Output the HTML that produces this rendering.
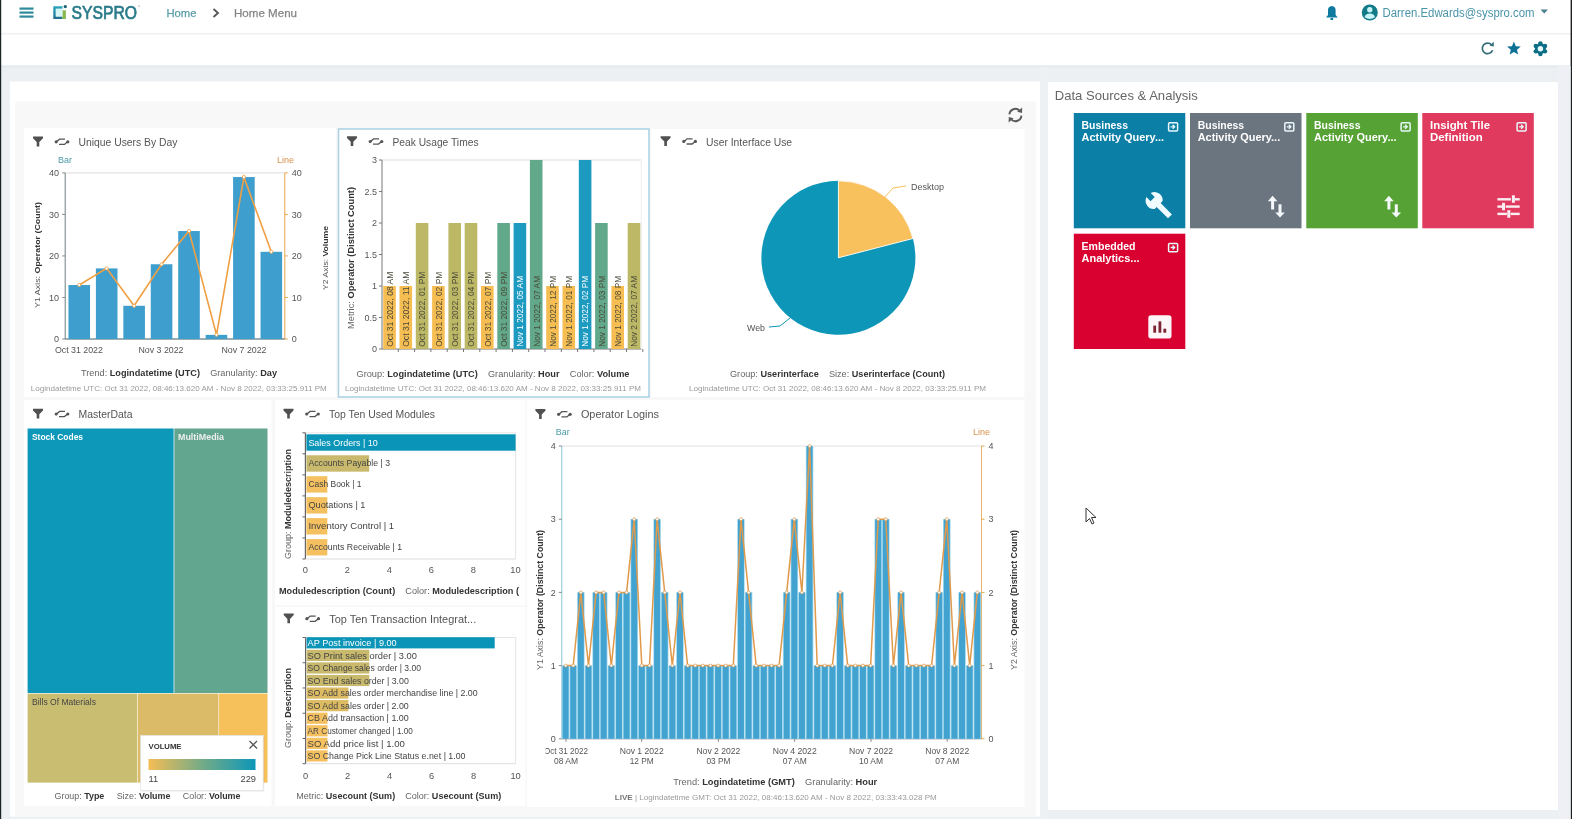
<!DOCTYPE html>
<html><head><meta charset="utf-8"><title>SYSPRO Home Menu</title>
<style>html,body{margin:0;padding:0;background:#e9eef1;overflow:hidden;}svg{display:block;font-family:"Liberation Sans",sans-serif;filter:blur(0.35px);}</style>
</head><body>
<svg width="1572" height="819" viewBox="0 0 1572 819" font-family="Liberation Sans, sans-serif"><rect x="0.00" y="0.00" width="1572.00" height="819.00" fill="#ecf0f3" />
<rect x="0.00" y="65.50" width="1572.00" height="2.00" fill="#e4e9ec" />
<rect x="0.00" y="0.00" width="1572.00" height="33.00" fill="#ffffff" />
<rect x="0.00" y="33.00" width="1572.00" height="1.50" fill="#eef0f1" />
<rect x="0.00" y="34.50" width="1572.00" height="31.50" fill="#ffffff" />
<rect x="0.00" y="65.00" width="1572.00" height="1.00" fill="#eef1f3" />
<rect x="0.00" y="0.00" width="1.20" height="819.00" fill="#1c2426" />
<rect x="1570.60" y="0.00" width="1.40" height="819.00" fill="#1e2220" />
<rect x="19.50" y="7.50" width="14.00" height="2.20" fill="#2f8a9c" />
<rect x="19.50" y="11.50" width="14.00" height="2.20" fill="#2f8a9c" />
<rect x="19.50" y="15.50" width="14.00" height="2.20" fill="#2f8a9c" />
<defs><linearGradient id="lg1" x1="0" y1="0" x2="0" y2="1"><stop offset="0" stop-color="#2aa6c0"/><stop offset="1" stop-color="#1f6e8c"/></linearGradient></defs>
<path d="M53.3 6.3 L62.5 6.3 L62.5 8.8 L55.8 8.8 L55.8 16.4 L62.5 16.4 L62.5 19 L53.3 19 Z" fill="url(#lg1)"/>
<rect x="62.40" y="10.30" width="3.50" height="8.70" fill="#8ab850" />
<rect x="55.80" y="8.80" width="6.60" height="7.60" fill="#d8f6f4" />
<circle cx="65.3" cy="6.6" r="1.7" fill="#1d6070"/>
<circle cx="139" cy="6.2" r="0.9" fill="none" stroke="#9ab" stroke-width="0.4"/>
<text x="71.50" y="19.10" font-size="17.5" fill="#2a7b8b" font-weight="normal" text-anchor="start" textLength="65.5" lengthAdjust="spacingAndGlyphs" stroke="#2a7b8b" stroke-width="0.7">SYSPRO</text>
<text x="166.50" y="17.18" font-size="11.6" fill="#5b9ca8" font-weight="normal" text-anchor="start" textLength="30.0" lengthAdjust="spacingAndGlyphs" stroke="#5b9ca8" stroke-width="0.25">Home</text>
<path d="M213.5 9 L218 13 L213.5 17" fill="none" stroke="#555" stroke-width="1.8"/>
<text x="234.00" y="17.18" font-size="11.6" fill="#858585" font-weight="normal" text-anchor="start" textLength="63.0" lengthAdjust="spacingAndGlyphs" stroke="#858585" stroke-width="0.25">Home Menu</text>
<path d="M1326 17.5 L1328 15 L1328 10 Q1328 6.5 1331.8 6 Q1335.6 6.5 1335.6 10 L1335.6 15 L1337.8 17.5 Z" fill="#0e7aa0"/>
<rect x="1330.5" y="18" width="2.6" height="2" fill="#0e7aa0"/>
<circle cx="1369.8" cy="12.5" r="8" fill="#137a88"/>
<circle cx="1369.8" cy="9.8" r="2.7" fill="#c8f4f8"/>
<path d="M1364.6 17.2 Q1365.5 13.6 1369.8 13.6 Q1374.1 13.6 1375 17.2 Q1372.5 19 1369.8 19 Q1367.1 19 1364.6 17.2 Z" fill="#c8f4f8"/>
<text x="1382.50" y="16.82" font-size="12" fill="#4a94a8" font-weight="normal" text-anchor="start" textLength="152.0" lengthAdjust="spacingAndGlyphs" >Darren.Edwards@syspro.com</text>
<path d="M1540.5 9.5 L1548 9.5 L1544.2 13.5 Z" fill="#4a7f90"/>
<path d="M1491.6 44.8 A5.3 5.3 0 1 0 1492.6 50.2" fill="none" stroke="#356e7a" stroke-width="1.7"/>
<path d="M1489.6 45.8 L1493.8 41.8 L1493.8 46.6 Z" fill="#356e7a"/>
<polygon points="1513.90,41.60 1515.80,46.18 1520.75,46.58 1516.98,49.80 1518.13,54.62 1513.90,52.04 1509.67,54.62 1510.82,49.80 1507.05,46.58 1512.00,46.18" fill="#0d7196"/>
<circle cx="1540.4" cy="48.7" r="5.476" fill="#0d6f85"/>
<circle cx="1540.40" cy="43.37" r="2.22" fill="#0d6f85"/>
<circle cx="1545.01" cy="46.04" r="2.22" fill="#0d6f85"/>
<circle cx="1545.01" cy="51.36" r="2.22" fill="#0d6f85"/>
<circle cx="1540.40" cy="54.03" r="2.22" fill="#0d6f85"/>
<circle cx="1535.79" cy="51.36" r="2.22" fill="#0d6f85"/>
<circle cx="1535.79" cy="46.04" r="2.22" fill="#0d6f85"/>
<circle cx="1540.4" cy="48.7" r="2.74" fill="#e8f8fc"/>
<rect x="9.80" y="81.50" width="1030.20" height="735.00" fill="#ffffff" />
<rect x="15.20" y="101.50" width="1021.00" height="715.00" fill="#f8f8f8" />
<g fill="none" stroke="#5a5a5a" stroke-width="1.9"><path d="M1009.4 114.4 A6 6 0 0 1 1019.6 110.6"/><path d="M1021.4 115.6 A6 6 0 0 1 1011.2 119.4"/></g>
<path d="M1017.2 111.8 L1022.2 107.6 L1022 113 Z" fill="#5a5a5a"/><path d="M1013.6 118.2 L1008.6 122.4 L1008.8 117 Z" fill="#5a5a5a"/>
<rect x="24.00" y="128.00" width="312.00" height="269.00" fill="#ffffff" />
<path d="M33 136.60000000000002 L43 136.60000000000002 L43 138.20000000000002 L39.3 142.0 L39.3 146.4 L36.7 146.4 L36.7 142.0 L33 138.20000000000002 Z" fill="#505050"/>
<g fill="none" stroke="#555" stroke-width="1.3"><path d="M56.5 141.8 L59.5 139.20000000000002 L65 139.20000000000002"/><path d="M67.5 141.8 L64.5 144.4 L59 144.4"/></g>
<circle cx="56.2" cy="141.8" r="1.6" fill="#555"/><circle cx="67.8" cy="141.8" r="1.6" fill="#555"/>
<text x="78.50" y="145.94" font-size="11.5" fill="#555" font-weight="normal" text-anchor="start" textLength="99.0" lengthAdjust="spacingAndGlyphs" >Unique Users By Day</text>
<text x="58.00" y="162.66" font-size="8.5" fill="#4a9aa8" font-weight="normal" text-anchor="start" textLength="14.0" lengthAdjust="spacingAndGlyphs" >Bar</text>
<text x="277.00" y="162.66" font-size="8.5" fill="#d8904a" font-weight="normal" text-anchor="start" textLength="17.0" lengthAdjust="spacingAndGlyphs" >Line</text>
<line x1="65.20" y1="172.90" x2="284.80" y2="172.90" stroke="#ddd" stroke-width="1" />
<line x1="65.20" y1="172.90" x2="65.20" y2="339.00" stroke="#6f7f84" stroke-width="1" />
<line x1="284.80" y1="172.90" x2="284.80" y2="339.00" stroke="#e8a64a" stroke-width="1" />
<line x1="65.20" y1="339.00" x2="284.80" y2="339.00" stroke="#3d5f68" stroke-width="1.2" />
<line x1="62.20" y1="339.00" x2="65.20" y2="339.00" stroke="#888" stroke-width="1" />
<line x1="284.80" y1="339.00" x2="287.80" y2="339.00" stroke="#e8a64a" stroke-width="1" />
<text x="59.00" y="342.24" font-size="9" fill="#555" font-weight="normal" text-anchor="end" >0</text>
<text x="291.80" y="342.24" font-size="9" fill="#555" font-weight="normal" text-anchor="start" >0</text>
<line x1="62.20" y1="297.48" x2="65.20" y2="297.48" stroke="#888" stroke-width="1" />
<line x1="284.80" y1="297.48" x2="287.80" y2="297.48" stroke="#e8a64a" stroke-width="1" />
<text x="59.00" y="300.72" font-size="9" fill="#555" font-weight="normal" text-anchor="end" >10</text>
<text x="291.80" y="300.72" font-size="9" fill="#555" font-weight="normal" text-anchor="start" >10</text>
<line x1="62.20" y1="255.95" x2="65.20" y2="255.95" stroke="#888" stroke-width="1" />
<line x1="284.80" y1="255.95" x2="287.80" y2="255.95" stroke="#e8a64a" stroke-width="1" />
<text x="59.00" y="259.19" font-size="9" fill="#555" font-weight="normal" text-anchor="end" >20</text>
<text x="291.80" y="259.19" font-size="9" fill="#555" font-weight="normal" text-anchor="start" >20</text>
<line x1="62.20" y1="214.43" x2="65.20" y2="214.43" stroke="#888" stroke-width="1" />
<line x1="284.80" y1="214.43" x2="287.80" y2="214.43" stroke="#e8a64a" stroke-width="1" />
<text x="59.00" y="217.67" font-size="9" fill="#555" font-weight="normal" text-anchor="end" >30</text>
<text x="291.80" y="217.67" font-size="9" fill="#555" font-weight="normal" text-anchor="start" >30</text>
<line x1="62.20" y1="172.90" x2="65.20" y2="172.90" stroke="#888" stroke-width="1" />
<line x1="284.80" y1="172.90" x2="287.80" y2="172.90" stroke="#e8a64a" stroke-width="1" />
<text x="59.00" y="176.14" font-size="9" fill="#555" font-weight="normal" text-anchor="end" >40</text>
<text x="291.80" y="176.14" font-size="9" fill="#555" font-weight="normal" text-anchor="start" >40</text>
<rect x="68.45" y="285.02" width="21.60" height="53.98" fill="#3e9fcf" />
<rect x="95.89" y="268.41" width="21.60" height="70.59" fill="#3e9fcf" />
<rect x="123.33" y="305.78" width="21.60" height="33.22" fill="#3e9fcf" />
<rect x="150.77" y="264.25" width="21.60" height="74.75" fill="#3e9fcf" />
<rect x="178.21" y="231.03" width="21.60" height="107.97" fill="#3e9fcf" />
<rect x="205.65" y="334.85" width="21.60" height="4.15" fill="#3e9fcf" />
<rect x="233.09" y="177.05" width="21.60" height="161.95" fill="#3e9fcf" />
<rect x="260.53" y="251.80" width="21.60" height="87.20" fill="#3e9fcf" />
<polyline points="79.2,285.0 106.7,268.4 134.1,305.8 161.6,264.3 189.0,231.0 216.5,334.8 243.9,177.1 271.3,251.8" fill="none" stroke="#f0a044" stroke-width="1.6"/>
<circle cx="79.2" cy="285.0" r="1.6" fill="#fff" stroke="#f0a044" stroke-width="0.8"/>
<circle cx="106.7" cy="268.4" r="1.6" fill="#fff" stroke="#f0a044" stroke-width="0.8"/>
<circle cx="134.1" cy="305.8" r="1.6" fill="#fff" stroke="#f0a044" stroke-width="0.8"/>
<circle cx="161.6" cy="264.3" r="1.6" fill="#fff" stroke="#f0a044" stroke-width="0.8"/>
<circle cx="189.0" cy="231.0" r="1.6" fill="#fff" stroke="#f0a044" stroke-width="0.8"/>
<circle cx="216.5" cy="334.8" r="1.6" fill="#fff" stroke="#f0a044" stroke-width="0.8"/>
<circle cx="243.9" cy="177.1" r="1.6" fill="#fff" stroke="#f0a044" stroke-width="0.8"/>
<circle cx="271.3" cy="251.8" r="1.6" fill="#fff" stroke="#f0a044" stroke-width="0.8"/>
<text x="78.90" y="353.05" font-size="9.3" fill="#555" font-weight="normal" text-anchor="middle" textLength="48.0" lengthAdjust="spacingAndGlyphs" >Oct 31 2022</text>
<text x="161.00" y="353.05" font-size="9.3" fill="#555" font-weight="normal" text-anchor="middle" textLength="45.0" lengthAdjust="spacingAndGlyphs" >Nov 3 2022</text>
<text x="244.00" y="353.05" font-size="9.3" fill="#555" font-weight="normal" text-anchor="middle" textLength="45.0" lengthAdjust="spacingAndGlyphs" >Nov 7 2022</text>
<text transform="translate(40,255) rotate(-90)" font-size="8" text-anchor="middle" fill="#555" textLength="106" lengthAdjust="spacingAndGlyphs" xml:space="preserve"><tspan>Y1 Axis: </tspan><tspan font-weight="bold" fill="#333">Operator (Count)</tspan></text>
<text transform="translate(327.5,258) rotate(-90)" font-size="8" text-anchor="middle" fill="#555" textLength="64" lengthAdjust="spacingAndGlyphs" xml:space="preserve"><tspan>Y2 Axis: </tspan><tspan font-weight="bold" fill="#333">Volume</tspan></text>
<text x="179.00" y="375.95" font-size="9.3" text-anchor="middle" textLength="196.0" lengthAdjust="spacingAndGlyphs"  xml:space="preserve"><tspan fill="#666" font-weight="normal">Trend: </tspan><tspan fill="#333" font-weight="bold">Logindatetime (UTC)</tspan><tspan fill="#666" font-weight="normal">    Granularity: </tspan><tspan fill="#333" font-weight="bold">Day</tspan></text>
<text x="178.80" y="390.70" font-size="7.5" fill="#9a9a9a" font-weight="normal" text-anchor="middle" textLength="296.0" lengthAdjust="spacingAndGlyphs" >Logindatetime UTC: Oct 31 2022, 08:46:13.620 AM - Nov 8 2022, 03:33:25.911 PM</text>
<rect x="338.50" y="129.00" width="310.50" height="268.00" fill="#ffffff" stroke="#a9d0e2" stroke-width="1.5"/>
<path d="M347 136.3 L357 136.3 L357 137.9 L353.3 141.7 L353.3 146.1 L350.7 146.1 L350.7 141.7 L347 137.9 Z" fill="#505050"/>
<g fill="none" stroke="#555" stroke-width="1.3"><path d="M370.5 141.5 L373.5 138.9 L379 138.9"/><path d="M381.5 141.5 L378.5 144.1 L373 144.1"/></g>
<circle cx="370.2" cy="141.5" r="1.6" fill="#555"/><circle cx="381.8" cy="141.5" r="1.6" fill="#555"/>
<text x="392.50" y="145.64" font-size="11.5" fill="#555" font-weight="normal" text-anchor="start" textLength="86.0" lengthAdjust="spacingAndGlyphs" >Peak Usage Times</text>
<line x1="382.00" y1="160.00" x2="641.20" y2="160.00" stroke="#ddd" stroke-width="1" />
<line x1="641.20" y1="160.00" x2="641.20" y2="349.00" stroke="#eee" stroke-width="1" />
<line x1="382.00" y1="160.00" x2="382.00" y2="349.00" stroke="#777" stroke-width="1" />
<line x1="382.00" y1="349.00" x2="641.20" y2="349.00" stroke="#777" stroke-width="1" />
<line x1="379.00" y1="349.00" x2="382.00" y2="349.00" stroke="#777" stroke-width="1" />
<text x="377.00" y="352.24" font-size="9" fill="#555" font-weight="normal" text-anchor="end" >0</text>
<line x1="379.00" y1="317.50" x2="382.00" y2="317.50" stroke="#777" stroke-width="1" />
<text x="377.00" y="320.74" font-size="9" fill="#555" font-weight="normal" text-anchor="end" >0.5</text>
<line x1="379.00" y1="286.00" x2="382.00" y2="286.00" stroke="#777" stroke-width="1" />
<text x="377.00" y="289.24" font-size="9" fill="#555" font-weight="normal" text-anchor="end" >1</text>
<line x1="379.00" y1="254.50" x2="382.00" y2="254.50" stroke="#777" stroke-width="1" />
<text x="377.00" y="257.74" font-size="9" fill="#555" font-weight="normal" text-anchor="end" >1.5</text>
<line x1="379.00" y1="223.00" x2="382.00" y2="223.00" stroke="#777" stroke-width="1" />
<text x="377.00" y="226.24" font-size="9" fill="#555" font-weight="normal" text-anchor="end" >2</text>
<line x1="379.00" y1="191.50" x2="382.00" y2="191.50" stroke="#777" stroke-width="1" />
<text x="377.00" y="194.74" font-size="9" fill="#555" font-weight="normal" text-anchor="end" >2.5</text>
<line x1="379.00" y1="160.00" x2="382.00" y2="160.00" stroke="#777" stroke-width="1" />
<text x="377.00" y="163.24" font-size="9" fill="#555" font-weight="normal" text-anchor="end" >3</text>
<text transform="translate(354,258) rotate(-90)" font-size="9.3" text-anchor="middle" fill="#666" textLength="142" lengthAdjust="spacingAndGlyphs" xml:space="preserve"><tspan>Metric: </tspan><tspan font-weight="bold" fill="#333">Operator (Distinct Count)</tspan></text>
<rect x="383.20" y="286.00" width="12.60" height="63.00" fill="#f6be52" />
<line x1="398.30" y1="349.00" x2="398.30" y2="352.00" stroke="#777" stroke-width="1" />
<text transform="translate(392.80,346.8) rotate(-90)" font-size="9" fill="#4a4a3a" textLength="75.1" lengthAdjust="spacingAndGlyphs">Oct 31 2022, 08 AM</text>
<rect x="399.50" y="286.00" width="12.60" height="63.00" fill="#f6be52" />
<line x1="414.60" y1="349.00" x2="414.60" y2="352.00" stroke="#777" stroke-width="1" />
<text transform="translate(409.10,346.8) rotate(-90)" font-size="9" fill="#4a4a3a" textLength="75.1" lengthAdjust="spacingAndGlyphs">Oct 31 2022, 11 AM</text>
<rect x="415.80" y="223.00" width="12.60" height="126.00" fill="#bdb866" />
<line x1="430.90" y1="349.00" x2="430.90" y2="352.00" stroke="#777" stroke-width="1" />
<text transform="translate(425.40,346.8) rotate(-90)" font-size="9" fill="#4a4a3a" textLength="75.1" lengthAdjust="spacingAndGlyphs">Oct 31 2022, 01 PM</text>
<rect x="432.10" y="286.00" width="12.60" height="63.00" fill="#f6be52" />
<line x1="447.20" y1="349.00" x2="447.20" y2="352.00" stroke="#777" stroke-width="1" />
<text transform="translate(441.70,346.8) rotate(-90)" font-size="9" fill="#4a4a3a" textLength="75.1" lengthAdjust="spacingAndGlyphs">Oct 31 2022, 02 PM</text>
<rect x="448.40" y="223.00" width="12.60" height="126.00" fill="#bdb866" />
<line x1="463.50" y1="349.00" x2="463.50" y2="352.00" stroke="#777" stroke-width="1" />
<text transform="translate(458.00,346.8) rotate(-90)" font-size="9" fill="#4a4a3a" textLength="75.1" lengthAdjust="spacingAndGlyphs">Oct 31 2022, 03 PM</text>
<rect x="464.70" y="223.00" width="12.60" height="126.00" fill="#bdb866" />
<line x1="479.80" y1="349.00" x2="479.80" y2="352.00" stroke="#777" stroke-width="1" />
<text transform="translate(474.30,346.8) rotate(-90)" font-size="9" fill="#4a4a3a" textLength="75.1" lengthAdjust="spacingAndGlyphs">Oct 31 2022, 04 PM</text>
<rect x="481.00" y="286.00" width="12.60" height="63.00" fill="#f6be52" />
<line x1="496.10" y1="349.00" x2="496.10" y2="352.00" stroke="#777" stroke-width="1" />
<text transform="translate(490.60,346.8) rotate(-90)" font-size="9" fill="#4a4a3a" textLength="75.1" lengthAdjust="spacingAndGlyphs">Oct 31 2022, 07 PM</text>
<rect x="497.30" y="223.00" width="12.60" height="126.00" fill="#62a88a" />
<line x1="512.40" y1="349.00" x2="512.40" y2="352.00" stroke="#777" stroke-width="1" />
<text transform="translate(506.90,346.8) rotate(-90)" font-size="9" fill="#4a4a3a" textLength="75.1" lengthAdjust="spacingAndGlyphs">Oct 31 2022, 09 PM</text>
<rect x="513.60" y="223.00" width="12.60" height="126.00" fill="#1c9ac0" />
<line x1="528.70" y1="349.00" x2="528.70" y2="352.00" stroke="#777" stroke-width="1" />
<text transform="translate(523.20,346.8) rotate(-90)" font-size="9" fill="#fff" textLength="70.9" lengthAdjust="spacingAndGlyphs">Nov 1 2022, 05 AM</text>
<rect x="529.90" y="160.00" width="12.60" height="189.00" fill="#62a88a" />
<line x1="545.00" y1="349.00" x2="545.00" y2="352.00" stroke="#777" stroke-width="1" />
<text transform="translate(539.50,346.8) rotate(-90)" font-size="9" fill="#4a4a3a" textLength="70.9" lengthAdjust="spacingAndGlyphs">Nov 1 2022, 07 AM</text>
<rect x="546.20" y="286.00" width="12.60" height="63.00" fill="#f6be52" />
<line x1="561.30" y1="349.00" x2="561.30" y2="352.00" stroke="#777" stroke-width="1" />
<text transform="translate(555.80,346.8) rotate(-90)" font-size="9" fill="#4a4a3a" textLength="70.9" lengthAdjust="spacingAndGlyphs">Nov 1 2022, 12 PM</text>
<rect x="562.50" y="286.00" width="12.60" height="63.00" fill="#f6be52" />
<line x1="577.60" y1="349.00" x2="577.60" y2="352.00" stroke="#777" stroke-width="1" />
<text transform="translate(572.10,346.8) rotate(-90)" font-size="9" fill="#4a4a3a" textLength="70.9" lengthAdjust="spacingAndGlyphs">Nov 1 2022, 01 PM</text>
<rect x="578.80" y="160.00" width="12.60" height="189.00" fill="#1c9ac0" />
<line x1="593.90" y1="349.00" x2="593.90" y2="352.00" stroke="#777" stroke-width="1" />
<text transform="translate(588.40,346.8) rotate(-90)" font-size="9" fill="#fff" textLength="70.9" lengthAdjust="spacingAndGlyphs">Nov 1 2022, 02 PM</text>
<rect x="595.10" y="223.00" width="12.60" height="126.00" fill="#62a88a" />
<line x1="610.20" y1="349.00" x2="610.20" y2="352.00" stroke="#777" stroke-width="1" />
<text transform="translate(604.70,346.8) rotate(-90)" font-size="9" fill="#4a4a3a" textLength="70.9" lengthAdjust="spacingAndGlyphs">Nov 1 2022, 03 PM</text>
<rect x="611.40" y="286.00" width="12.60" height="63.00" fill="#f6be52" />
<line x1="626.50" y1="349.00" x2="626.50" y2="352.00" stroke="#777" stroke-width="1" />
<text transform="translate(621.00,346.8) rotate(-90)" font-size="9" fill="#4a4a3a" textLength="70.9" lengthAdjust="spacingAndGlyphs">Nov 1 2022, 08 PM</text>
<rect x="627.70" y="223.00" width="12.60" height="126.00" fill="#bdb866" />
<line x1="642.80" y1="349.00" x2="642.80" y2="352.00" stroke="#777" stroke-width="1" />
<text transform="translate(637.30,346.8) rotate(-90)" font-size="9" fill="#4a4a3a" textLength="70.9" lengthAdjust="spacingAndGlyphs">Nov 2 2022, 07 AM</text>
<text x="493.00" y="376.75" font-size="9.3" text-anchor="middle" textLength="273.0" lengthAdjust="spacingAndGlyphs"  xml:space="preserve"><tspan fill="#666" font-weight="normal">Group: </tspan><tspan fill="#333" font-weight="bold">Logindatetime (UTC)</tspan><tspan fill="#666" font-weight="normal">    Granularity: </tspan><tspan fill="#333" font-weight="bold">Hour</tspan><tspan fill="#666" font-weight="normal">    Color: </tspan><tspan fill="#333" font-weight="bold">Volume</tspan></text>
<text x="493.00" y="390.50" font-size="7.5" fill="#9a9a9a" font-weight="normal" text-anchor="middle" textLength="296.0" lengthAdjust="spacingAndGlyphs" >Logindatetime UTC: Oct 31 2022, 08:46:13.620 AM - Nov 8 2022, 03:33:25.911 PM</text>
<rect x="651.00" y="129.00" width="373.50" height="268.00" fill="#ffffff" />
<path d="M660.6 136.20000000000002 L670.6 136.20000000000002 L670.6 137.8 L666.9 141.6 L666.9 146.0 L664.3000000000001 146.0 L664.3000000000001 141.6 L660.6 137.8 Z" fill="#505050"/>
<g fill="none" stroke="#555" stroke-width="1.3"><path d="M684.1 141.4 L687.1 138.8 L692.6 138.8"/><path d="M695.1 141.4 L692.1 144.0 L686.6 144.0"/></g>
<circle cx="683.8000000000001" cy="141.4" r="1.6" fill="#555"/><circle cx="695.4" cy="141.4" r="1.6" fill="#555"/>
<text x="706.10" y="145.54" font-size="11.5" fill="#555" font-weight="normal" text-anchor="start" textLength="86.0" lengthAdjust="spacingAndGlyphs" >User Interface Use</text>
<path d="M838.4 257.8 L838.4 180.8 A77 77 0 1 0 912.95 238.52 Z" fill="#0e96b8"/>
<path d="M838.4 257.8 L838.4 180.8 A77 77 0 0 1 912.95 238.52 Z" fill="#f8c15e" stroke="#fff" stroke-width="0.8"/>
<polyline points="884,198 893,188 906,186" fill="none" stroke="#f7c25c" stroke-width="1"/>
<polyline points="790,318 780,326 769,327" fill="none" stroke="#0e96b8" stroke-width="1"/>
<text x="911.00" y="189.65" font-size="9.3" fill="#555" font-weight="normal" text-anchor="start" textLength="33.0" lengthAdjust="spacingAndGlyphs" >Desktop</text>
<text x="747.00" y="330.75" font-size="9.3" fill="#555" font-weight="normal" text-anchor="start" textLength="18.0" lengthAdjust="spacingAndGlyphs" >Web</text>
<text x="837.50" y="376.65" font-size="9.3" text-anchor="middle" textLength="215.0" lengthAdjust="spacingAndGlyphs"  xml:space="preserve"><tspan fill="#666" font-weight="normal">Group: </tspan><tspan fill="#333" font-weight="bold">Userinterface</tspan><tspan fill="#666" font-weight="normal">    Size: </tspan><tspan fill="#333" font-weight="bold">Userinterface (Count)</tspan></text>
<text x="837.50" y="391.40" font-size="7.5" fill="#9a9a9a" font-weight="normal" text-anchor="middle" textLength="297.0" lengthAdjust="spacingAndGlyphs" >Logindatetime UTC: Oct 31 2022, 08:46:13.620 AM - Nov 8 2022, 03:33:25.911 PM</text>
<rect x="24.00" y="400.00" width="247.50" height="406.00" fill="#ffffff" />
<path d="M33 408.8 L43 408.8 L43 410.4 L39.3 414.2 L39.3 418.6 L36.7 418.6 L36.7 414.2 L33 410.4 Z" fill="#505050"/>
<g fill="none" stroke="#555" stroke-width="1.3"><path d="M56.5 414 L59.5 411.4 L65 411.4"/><path d="M67.5 414 L64.5 416.6 L59 416.6"/></g>
<circle cx="56.2" cy="414" r="1.6" fill="#555"/><circle cx="67.8" cy="414" r="1.6" fill="#555"/>
<text x="78.50" y="418.14" font-size="11.5" fill="#555" font-weight="normal" text-anchor="start" textLength="54.0" lengthAdjust="spacingAndGlyphs" >MasterData</text>
<rect x="27.60" y="428.50" width="146.00" height="264.50" fill="#0d97b9" />
<rect x="174.30" y="428.50" width="93.20" height="264.50" fill="#62a690" />
<rect x="27.60" y="693.60" width="109.40" height="89.00" fill="#c9bd72" />
<rect x="137.60" y="693.60" width="80.90" height="89.00" fill="#dbbb68" />
<rect x="219.10" y="693.60" width="48.40" height="89.00" fill="#f6c05a" />
<text x="32.00" y="440.35" font-size="9.3" fill="#fff" font-weight="bold" text-anchor="start" textLength="51.0" lengthAdjust="spacingAndGlyphs" >Stock Codes</text>
<text x="178.00" y="440.35" font-size="9.3" fill="#eee" font-weight="bold" text-anchor="start" textLength="46.0" lengthAdjust="spacingAndGlyphs" >MultiMedia</text>
<text x="32.00" y="705.35" font-size="9.3" fill="#444" font-weight="normal" text-anchor="start" textLength="64.0" lengthAdjust="spacingAndGlyphs" >Bills Of Materials</text>
<rect x="141.70" y="736.60" width="122.50" height="55.00" fill="#000" opacity="0.08"/>
<rect x="140.70" y="735.40" width="122.50" height="55.00" fill="#ffffff" stroke="#e3e3e3" stroke-width="0.8"/>
<text x="148.50" y="749.38" font-size="8" fill="#333" font-weight="bold" text-anchor="start" textLength="33.0" lengthAdjust="spacingAndGlyphs" >VOLUME</text>
<path d="M249.5 741 L257 748.5 M257 741 L249.5 748.5" stroke="#555" stroke-width="1.3"/>
<defs><linearGradient id="vg" x1="0" x2="1" y1="0" y2="0"><stop offset="0" stop-color="#f5bd55"/><stop offset="0.5" stop-color="#74ab86"/><stop offset="1" stop-color="#0d97b9"/></linearGradient></defs>
<rect x="148.50" y="759.00" width="107.00" height="11.00" fill="url(#vg)" />
<text x="148.50" y="782.35" font-size="9.3" fill="#444" font-weight="normal" text-anchor="start" >11</text>
<text x="256.00" y="782.35" font-size="9.3" fill="#444" font-weight="normal" text-anchor="end" >229</text>
<text x="147.50" y="799.05" font-size="9.3" text-anchor="middle" textLength="186.0" lengthAdjust="spacingAndGlyphs"  xml:space="preserve"><tspan fill="#666" font-weight="normal">Group: </tspan><tspan fill="#333" font-weight="bold">Type</tspan><tspan fill="#666" font-weight="normal">     Size: </tspan><tspan fill="#333" font-weight="bold">Volume</tspan><tspan fill="#666" font-weight="normal">     Color: </tspan><tspan fill="#333" font-weight="bold">Volume</tspan></text>
<rect x="275.00" y="400.00" width="250.30" height="205.30" fill="#ffffff" />
<path d="M283.5 408.8 L293.5 408.8 L293.5 410.4 L289.8 414.2 L289.8 418.6 L287.2 418.6 L287.2 414.2 L283.5 410.4 Z" fill="#505050"/>
<g fill="none" stroke="#555" stroke-width="1.3"><path d="M307.0 414 L310.0 411.4 L315.5 411.4"/><path d="M318.0 414 L315.0 416.6 L309.5 416.6"/></g>
<circle cx="306.7" cy="414" r="1.6" fill="#555"/><circle cx="318.3" cy="414" r="1.6" fill="#555"/>
<text x="329.00" y="418.14" font-size="11.5" fill="#555" font-weight="normal" text-anchor="start" textLength="106.0" lengthAdjust="spacingAndGlyphs" >Top Ten Used Modules</text>
<line x1="305.40" y1="432.80" x2="515.60" y2="432.80" stroke="#e5e5e5" stroke-width="1" />
<line x1="515.60" y1="432.80" x2="515.60" y2="559.00" stroke="#e5e5e5" stroke-width="1" />
<line x1="305.40" y1="432.80" x2="305.40" y2="559.00" stroke="#666" stroke-width="1.2" />
<line x1="305.40" y1="559.00" x2="515.60" y2="559.00" stroke="#ddd" stroke-width="1" />
<rect x="306.40" y="434.30" width="209.20" height="16.40" fill="#0a95b8" />
<text x="308.40" y="445.54" font-size="9" fill="#fff" font-weight="normal" text-anchor="start" textLength="69.4" lengthAdjust="spacingAndGlyphs" >Sales Orders | 10</text>
<rect x="306.40" y="455.25" width="62.76" height="16.40" fill="#c8b96c" />
<text x="308.40" y="466.49" font-size="9" fill="#444" font-weight="normal" text-anchor="start" textLength="81.6" lengthAdjust="spacingAndGlyphs" >Accounts Payable | 3</text>
<rect x="306.40" y="476.20" width="20.92" height="16.40" fill="#f5c060" />
<text x="308.40" y="487.44" font-size="9" fill="#444" font-weight="normal" text-anchor="start" textLength="53.0" lengthAdjust="spacingAndGlyphs" >Cash Book | 1</text>
<rect x="306.40" y="497.15" width="20.92" height="16.40" fill="#f5c060" />
<text x="308.40" y="508.39" font-size="9" fill="#444" font-weight="normal" text-anchor="start" textLength="57.1" lengthAdjust="spacingAndGlyphs" >Quotations | 1</text>
<rect x="306.40" y="518.10" width="20.92" height="16.40" fill="#f5c060" />
<text x="308.40" y="529.34" font-size="9" fill="#444" font-weight="normal" text-anchor="start" textLength="85.7" lengthAdjust="spacingAndGlyphs" >Inventory Control | 1</text>
<rect x="306.40" y="539.05" width="20.92" height="16.40" fill="#f5c060" />
<text x="308.40" y="550.29" font-size="9" fill="#444" font-weight="normal" text-anchor="start" textLength="93.8" lengthAdjust="spacingAndGlyphs" >Accounts Receivable | 1</text>
<line x1="302.40" y1="432.80" x2="305.40" y2="432.80" stroke="#666" stroke-width="1" />
<line x1="302.40" y1="453.83" x2="305.40" y2="453.83" stroke="#666" stroke-width="1" />
<line x1="302.40" y1="474.87" x2="305.40" y2="474.87" stroke="#666" stroke-width="1" />
<line x1="302.40" y1="495.90" x2="305.40" y2="495.90" stroke="#666" stroke-width="1" />
<line x1="302.40" y1="516.93" x2="305.40" y2="516.93" stroke="#666" stroke-width="1" />
<line x1="302.40" y1="537.97" x2="305.40" y2="537.97" stroke="#666" stroke-width="1" />
<line x1="302.40" y1="559.00" x2="305.40" y2="559.00" stroke="#666" stroke-width="1" />
<text x="305.40" y="573.05" font-size="9.3" fill="#555" font-weight="normal" text-anchor="middle" >0</text>
<text x="347.40" y="573.05" font-size="9.3" fill="#555" font-weight="normal" text-anchor="middle" >2</text>
<text x="389.40" y="573.05" font-size="9.3" fill="#555" font-weight="normal" text-anchor="middle" >4</text>
<text x="431.40" y="573.05" font-size="9.3" fill="#555" font-weight="normal" text-anchor="middle" >6</text>
<text x="473.40" y="573.05" font-size="9.3" fill="#555" font-weight="normal" text-anchor="middle" >8</text>
<text x="515.40" y="573.05" font-size="9.3" fill="#555" font-weight="normal" text-anchor="middle" >10</text>
<text transform="translate(290.5,504) rotate(-90)" font-size="9.3" text-anchor="middle" fill="#666" textLength="110" lengthAdjust="spacingAndGlyphs" xml:space="preserve"><tspan>Group: </tspan><tspan font-weight="bold" fill="#333">Moduledescription</tspan></text>
<text x="279.00" y="594.35" font-size="9.3" text-anchor="start" textLength="240.0" lengthAdjust="spacingAndGlyphs"  xml:space="preserve"><tspan fill="#333" font-weight="bold">Moduledescription (Count)</tspan><tspan fill="#666" font-weight="normal">    Color: </tspan><tspan fill="#333" font-weight="bold">Moduledescription (</tspan></text>
<rect x="275.00" y="607.00" width="250.30" height="199.00" fill="#ffffff" />
<path d="M283.7 613.5 L293.7 613.5 L293.7 615.1 L290.0 618.9000000000001 L290.0 623.3000000000001 L287.4 623.3000000000001 L287.4 618.9000000000001 L283.7 615.1 Z" fill="#505050"/>
<g fill="none" stroke="#555" stroke-width="1.3"><path d="M307.2 618.7 L310.2 616.1 L315.7 616.1"/><path d="M318.2 618.7 L315.2 621.3000000000001 L309.7 621.3000000000001"/></g>
<circle cx="306.9" cy="618.7" r="1.6" fill="#555"/><circle cx="318.5" cy="618.7" r="1.6" fill="#555"/>
<text x="329.20" y="622.84" font-size="11.5" fill="#555" font-weight="normal" text-anchor="start" textLength="147.0" lengthAdjust="spacingAndGlyphs" >Top Ten Transaction Integrat...</text>
<line x1="305.60" y1="637.50" x2="515.60" y2="637.50" stroke="#e5e5e5" stroke-width="1" />
<line x1="515.60" y1="637.50" x2="515.60" y2="763.70" stroke="#e5e5e5" stroke-width="1" />
<line x1="305.60" y1="637.50" x2="305.60" y2="763.70" stroke="#666" stroke-width="1.2" />
<line x1="305.60" y1="763.70" x2="515.60" y2="763.70" stroke="#ddd" stroke-width="1" />
<rect x="306.60" y="637.20" width="188.10" height="11.20" fill="#0a95b8" />
<text x="307.60" y="645.97" font-size="8.8" fill="#fff" font-weight="normal" text-anchor="start" textLength="89.1" lengthAdjust="spacingAndGlyphs" >AP Post invoice | 9.00</text>
<rect x="306.60" y="649.77" width="62.70" height="11.20" fill="#c8b96c" />
<text x="307.60" y="658.54" font-size="8.8" fill="#444" font-weight="normal" text-anchor="start" textLength="109.3" lengthAdjust="spacingAndGlyphs" >SO Print sales order | 3.00</text>
<rect x="306.60" y="662.34" width="62.70" height="11.20" fill="#c8b96c" />
<text x="307.60" y="671.11" font-size="8.8" fill="#444" font-weight="normal" text-anchor="start" textLength="113.4" lengthAdjust="spacingAndGlyphs" >SO Change sales order | 3.00</text>
<rect x="306.60" y="674.91" width="62.70" height="11.20" fill="#c8b96c" />
<text x="307.60" y="683.68" font-size="8.8" fill="#444" font-weight="normal" text-anchor="start" textLength="101.2" lengthAdjust="spacingAndGlyphs" >SO End sales order | 3.00</text>
<rect x="306.60" y="687.48" width="41.80" height="11.20" fill="#dcbb62" />
<text x="307.60" y="696.25" font-size="8.8" fill="#444" font-weight="normal" text-anchor="start" textLength="170.1" lengthAdjust="spacingAndGlyphs" >SO Add sales order merchandise line | 2.00</text>
<rect x="306.60" y="700.05" width="41.80" height="11.20" fill="#dcbb62" />
<text x="307.60" y="708.82" font-size="8.8" fill="#444" font-weight="normal" text-anchor="start" textLength="101.2" lengthAdjust="spacingAndGlyphs" >SO Add sales order | 2.00</text>
<rect x="306.60" y="712.62" width="20.90" height="11.20" fill="#f5c060" />
<text x="307.60" y="721.39" font-size="8.8" fill="#444" font-weight="normal" text-anchor="start" textLength="101.2" lengthAdjust="spacingAndGlyphs" >CB Add transaction | 1.00</text>
<rect x="306.60" y="725.19" width="20.90" height="11.20" fill="#f5c060" />
<text x="307.60" y="733.96" font-size="8.8" fill="#444" font-weight="normal" text-anchor="start" textLength="105.3" lengthAdjust="spacingAndGlyphs" >AR Customer changed | 1.00</text>
<rect x="306.60" y="737.76" width="20.90" height="11.20" fill="#f5c060" />
<text x="307.60" y="746.53" font-size="8.8" fill="#444" font-weight="normal" text-anchor="start" textLength="97.2" lengthAdjust="spacingAndGlyphs" >SO Add price list | 1.00</text>
<rect x="306.60" y="750.33" width="20.90" height="11.20" fill="#f5c060" />
<text x="307.60" y="759.10" font-size="8.8" fill="#444" font-weight="normal" text-anchor="start" textLength="157.9" lengthAdjust="spacingAndGlyphs" >SO Change Pick Line Status e.net | 1.00</text>
<line x1="302.60" y1="637.50" x2="305.60" y2="637.50" stroke="#666" stroke-width="1" />
<line x1="302.60" y1="662.74" x2="305.60" y2="662.74" stroke="#666" stroke-width="1" />
<line x1="302.60" y1="687.98" x2="305.60" y2="687.98" stroke="#666" stroke-width="1" />
<line x1="302.60" y1="713.22" x2="305.60" y2="713.22" stroke="#666" stroke-width="1" />
<line x1="302.60" y1="738.46" x2="305.60" y2="738.46" stroke="#666" stroke-width="1" />
<line x1="302.60" y1="763.70" x2="305.60" y2="763.70" stroke="#666" stroke-width="1" />
<text x="305.60" y="778.55" font-size="9.3" fill="#555" font-weight="normal" text-anchor="middle" >0</text>
<text x="347.60" y="778.55" font-size="9.3" fill="#555" font-weight="normal" text-anchor="middle" >2</text>
<text x="389.60" y="778.55" font-size="9.3" fill="#555" font-weight="normal" text-anchor="middle" >4</text>
<text x="431.60" y="778.55" font-size="9.3" fill="#555" font-weight="normal" text-anchor="middle" >6</text>
<text x="473.60" y="778.55" font-size="9.3" fill="#555" font-weight="normal" text-anchor="middle" >8</text>
<text x="515.60" y="778.55" font-size="9.3" fill="#555" font-weight="normal" text-anchor="middle" >10</text>
<text transform="translate(290.5,708) rotate(-90)" font-size="9.3" text-anchor="middle" fill="#666" textLength="80" lengthAdjust="spacingAndGlyphs" xml:space="preserve"><tspan>Group: </tspan><tspan font-weight="bold" fill="#333">Description</tspan></text>
<text x="398.70" y="798.65" font-size="9.3" text-anchor="middle" textLength="205.0" lengthAdjust="spacingAndGlyphs"  xml:space="preserve"><tspan fill="#666" font-weight="normal">Metric: </tspan><tspan fill="#333" font-weight="bold">Usecount (Sum)</tspan><tspan fill="#666" font-weight="normal">    Color: </tspan><tspan fill="#333" font-weight="bold">Usecount (Sum)</tspan></text>
<rect x="527.00" y="400.00" width="497.50" height="407.00" fill="#ffffff" />
<path d="M535.4 409.1 L545.4 409.1 L545.4 410.7 L541.6999999999999 414.5 L541.6999999999999 418.90000000000003 L539.1 418.90000000000003 L539.1 414.5 L535.4 410.7 Z" fill="#505050"/>
<g fill="none" stroke="#555" stroke-width="1.3"><path d="M558.9 414.3 L561.9 411.7 L567.4 411.7"/><path d="M569.9 414.3 L566.9 416.90000000000003 L561.4 416.90000000000003"/></g>
<circle cx="558.6" cy="414.3" r="1.6" fill="#555"/><circle cx="570.1999999999999" cy="414.3" r="1.6" fill="#555"/>
<text x="580.90" y="418.44" font-size="11.5" fill="#555" font-weight="normal" text-anchor="start" textLength="78.0" lengthAdjust="spacingAndGlyphs" >Operator Logins</text>
<text x="555.70" y="434.76" font-size="8.5" fill="#4a9aa8" font-weight="normal" text-anchor="start" textLength="14.0" lengthAdjust="spacingAndGlyphs" >Bar</text>
<text x="973.00" y="434.76" font-size="8.5" fill="#d8904a" font-weight="normal" text-anchor="start" textLength="17.0" lengthAdjust="spacingAndGlyphs" >Line</text>
<line x1="561.80" y1="446.00" x2="981.50" y2="446.00" stroke="#e0e0e0" stroke-width="1" />
<line x1="561.80" y1="446.00" x2="561.80" y2="738.80" stroke="#8cc5d8" stroke-width="1" />
<line x1="981.50" y1="446.00" x2="981.50" y2="738.80" stroke="#e8b36a" stroke-width="1" />
<line x1="561.80" y1="738.80" x2="981.50" y2="738.80" stroke="#888" stroke-width="1" />
<line x1="558.80" y1="738.80" x2="561.80" y2="738.80" stroke="#888" stroke-width="1" />
<line x1="981.50" y1="738.80" x2="984.50" y2="738.80" stroke="#e8a64a" stroke-width="1" />
<text x="555.80" y="742.04" font-size="9" fill="#555" font-weight="normal" text-anchor="end" >0</text>
<text x="988.50" y="742.04" font-size="9" fill="#555" font-weight="normal" text-anchor="start" >0</text>
<line x1="558.80" y1="665.60" x2="561.80" y2="665.60" stroke="#888" stroke-width="1" />
<line x1="981.50" y1="665.60" x2="984.50" y2="665.60" stroke="#e8a64a" stroke-width="1" />
<text x="555.80" y="668.84" font-size="9" fill="#555" font-weight="normal" text-anchor="end" >1</text>
<text x="988.50" y="668.84" font-size="9" fill="#555" font-weight="normal" text-anchor="start" >1</text>
<line x1="558.80" y1="592.40" x2="561.80" y2="592.40" stroke="#888" stroke-width="1" />
<line x1="981.50" y1="592.40" x2="984.50" y2="592.40" stroke="#e8a64a" stroke-width="1" />
<text x="555.80" y="595.64" font-size="9" fill="#555" font-weight="normal" text-anchor="end" >2</text>
<text x="988.50" y="595.64" font-size="9" fill="#555" font-weight="normal" text-anchor="start" >2</text>
<line x1="558.80" y1="519.20" x2="561.80" y2="519.20" stroke="#888" stroke-width="1" />
<line x1="981.50" y1="519.20" x2="984.50" y2="519.20" stroke="#e8a64a" stroke-width="1" />
<text x="555.80" y="522.44" font-size="9" fill="#555" font-weight="normal" text-anchor="end" >3</text>
<text x="988.50" y="522.44" font-size="9" fill="#555" font-weight="normal" text-anchor="start" >3</text>
<line x1="558.80" y1="446.00" x2="561.80" y2="446.00" stroke="#888" stroke-width="1" />
<line x1="981.50" y1="446.00" x2="984.50" y2="446.00" stroke="#e8a64a" stroke-width="1" />
<text x="555.80" y="449.24" font-size="9" fill="#555" font-weight="normal" text-anchor="end" >4</text>
<text x="988.50" y="449.24" font-size="9" fill="#555" font-weight="normal" text-anchor="start" >4</text>
<rect x="561.80" y="665.60" width="7.60" height="73.20" fill="#a9dbf0" />
<rect x="569.42" y="665.60" width="7.60" height="73.20" fill="#a9dbf0" />
<rect x="577.05" y="592.40" width="7.60" height="146.40" fill="#a9dbf0" />
<rect x="584.67" y="665.60" width="7.60" height="73.20" fill="#a9dbf0" />
<rect x="592.30" y="592.40" width="7.60" height="146.40" fill="#a9dbf0" />
<rect x="599.92" y="592.40" width="7.60" height="146.40" fill="#a9dbf0" />
<rect x="607.54" y="665.60" width="7.60" height="73.20" fill="#a9dbf0" />
<rect x="615.17" y="592.40" width="7.60" height="146.40" fill="#a9dbf0" />
<rect x="622.79" y="592.40" width="7.60" height="146.40" fill="#a9dbf0" />
<rect x="630.42" y="519.20" width="7.60" height="219.60" fill="#a9dbf0" />
<rect x="638.04" y="665.60" width="7.60" height="73.20" fill="#a9dbf0" />
<rect x="645.66" y="665.60" width="7.60" height="73.20" fill="#a9dbf0" />
<rect x="653.29" y="519.20" width="7.60" height="219.60" fill="#a9dbf0" />
<rect x="660.91" y="592.40" width="7.60" height="146.40" fill="#a9dbf0" />
<rect x="668.54" y="665.60" width="7.60" height="73.20" fill="#a9dbf0" />
<rect x="676.16" y="592.40" width="7.60" height="146.40" fill="#a9dbf0" />
<rect x="683.79" y="665.60" width="7.60" height="73.20" fill="#a9dbf0" />
<rect x="691.41" y="665.60" width="7.60" height="73.20" fill="#a9dbf0" />
<rect x="699.03" y="665.60" width="7.60" height="73.20" fill="#a9dbf0" />
<rect x="706.66" y="665.60" width="7.60" height="73.20" fill="#a9dbf0" />
<rect x="714.28" y="665.60" width="7.60" height="73.20" fill="#a9dbf0" />
<rect x="721.91" y="665.60" width="7.60" height="73.20" fill="#a9dbf0" />
<rect x="729.53" y="665.60" width="7.60" height="73.20" fill="#a9dbf0" />
<rect x="737.15" y="519.20" width="7.60" height="219.60" fill="#a9dbf0" />
<rect x="744.78" y="592.40" width="7.60" height="146.40" fill="#a9dbf0" />
<rect x="752.40" y="665.60" width="7.60" height="73.20" fill="#a9dbf0" />
<rect x="760.03" y="665.60" width="7.60" height="73.20" fill="#a9dbf0" />
<rect x="767.65" y="665.60" width="7.60" height="73.20" fill="#a9dbf0" />
<rect x="775.27" y="665.60" width="7.60" height="73.20" fill="#a9dbf0" />
<rect x="782.90" y="592.40" width="7.60" height="146.40" fill="#a9dbf0" />
<rect x="790.52" y="519.20" width="7.60" height="219.60" fill="#a9dbf0" />
<rect x="798.15" y="592.40" width="7.60" height="146.40" fill="#a9dbf0" />
<rect x="805.77" y="446.00" width="7.60" height="292.80" fill="#a9dbf0" />
<rect x="813.39" y="665.60" width="7.60" height="73.20" fill="#a9dbf0" />
<rect x="821.02" y="665.60" width="7.60" height="73.20" fill="#a9dbf0" />
<rect x="828.64" y="665.60" width="7.60" height="73.20" fill="#a9dbf0" />
<rect x="836.27" y="592.40" width="7.60" height="146.40" fill="#a9dbf0" />
<rect x="843.89" y="665.60" width="7.60" height="73.20" fill="#a9dbf0" />
<rect x="851.51" y="665.60" width="7.60" height="73.20" fill="#a9dbf0" />
<rect x="859.14" y="665.60" width="7.60" height="73.20" fill="#a9dbf0" />
<rect x="866.76" y="665.60" width="7.60" height="73.20" fill="#a9dbf0" />
<rect x="874.39" y="519.20" width="7.60" height="219.60" fill="#a9dbf0" />
<rect x="882.01" y="519.20" width="7.60" height="219.60" fill="#a9dbf0" />
<rect x="889.64" y="665.60" width="7.60" height="73.20" fill="#a9dbf0" />
<rect x="897.26" y="592.40" width="7.60" height="146.40" fill="#a9dbf0" />
<rect x="904.88" y="665.60" width="7.60" height="73.20" fill="#a9dbf0" />
<rect x="912.51" y="665.60" width="7.60" height="73.20" fill="#a9dbf0" />
<rect x="920.13" y="665.60" width="7.60" height="73.20" fill="#a9dbf0" />
<rect x="927.76" y="665.60" width="7.60" height="73.20" fill="#a9dbf0" />
<rect x="935.38" y="592.40" width="7.60" height="146.40" fill="#a9dbf0" />
<rect x="943.00" y="519.20" width="7.60" height="219.60" fill="#a9dbf0" />
<rect x="950.63" y="665.60" width="7.60" height="73.20" fill="#a9dbf0" />
<rect x="958.25" y="592.40" width="7.60" height="146.40" fill="#a9dbf0" />
<rect x="965.88" y="665.60" width="7.60" height="73.20" fill="#a9dbf0" />
<rect x="973.50" y="592.40" width="7.60" height="146.40" fill="#a9dbf0" />
<rect x="562.60" y="665.60" width="6.00" height="73.20" fill="#42a3d0" />
<rect x="570.22" y="665.60" width="6.00" height="73.20" fill="#42a3d0" />
<rect x="577.85" y="592.40" width="6.00" height="146.40" fill="#42a3d0" />
<rect x="585.47" y="665.60" width="6.00" height="73.20" fill="#42a3d0" />
<rect x="593.10" y="592.40" width="6.00" height="146.40" fill="#42a3d0" />
<rect x="600.72" y="592.40" width="6.00" height="146.40" fill="#42a3d0" />
<rect x="608.34" y="665.60" width="6.00" height="73.20" fill="#42a3d0" />
<rect x="615.97" y="592.40" width="6.00" height="146.40" fill="#42a3d0" />
<rect x="623.59" y="592.40" width="6.00" height="146.40" fill="#42a3d0" />
<rect x="631.22" y="519.20" width="6.00" height="219.60" fill="#42a3d0" />
<rect x="638.84" y="665.60" width="6.00" height="73.20" fill="#42a3d0" />
<rect x="646.46" y="665.60" width="6.00" height="73.20" fill="#42a3d0" />
<rect x="654.09" y="519.20" width="6.00" height="219.60" fill="#42a3d0" />
<rect x="661.71" y="592.40" width="6.00" height="146.40" fill="#42a3d0" />
<rect x="669.34" y="665.60" width="6.00" height="73.20" fill="#42a3d0" />
<rect x="676.96" y="592.40" width="6.00" height="146.40" fill="#42a3d0" />
<rect x="684.59" y="665.60" width="6.00" height="73.20" fill="#42a3d0" />
<rect x="692.21" y="665.60" width="6.00" height="73.20" fill="#42a3d0" />
<rect x="699.83" y="665.60" width="6.00" height="73.20" fill="#42a3d0" />
<rect x="707.46" y="665.60" width="6.00" height="73.20" fill="#42a3d0" />
<rect x="715.08" y="665.60" width="6.00" height="73.20" fill="#42a3d0" />
<rect x="722.71" y="665.60" width="6.00" height="73.20" fill="#42a3d0" />
<rect x="730.33" y="665.60" width="6.00" height="73.20" fill="#42a3d0" />
<rect x="737.95" y="519.20" width="6.00" height="219.60" fill="#42a3d0" />
<rect x="745.58" y="592.40" width="6.00" height="146.40" fill="#42a3d0" />
<rect x="753.20" y="665.60" width="6.00" height="73.20" fill="#42a3d0" />
<rect x="760.83" y="665.60" width="6.00" height="73.20" fill="#42a3d0" />
<rect x="768.45" y="665.60" width="6.00" height="73.20" fill="#42a3d0" />
<rect x="776.07" y="665.60" width="6.00" height="73.20" fill="#42a3d0" />
<rect x="783.70" y="592.40" width="6.00" height="146.40" fill="#42a3d0" />
<rect x="791.32" y="519.20" width="6.00" height="219.60" fill="#42a3d0" />
<rect x="798.95" y="592.40" width="6.00" height="146.40" fill="#42a3d0" />
<rect x="806.57" y="446.00" width="6.00" height="292.80" fill="#42a3d0" />
<rect x="814.19" y="665.60" width="6.00" height="73.20" fill="#42a3d0" />
<rect x="821.82" y="665.60" width="6.00" height="73.20" fill="#42a3d0" />
<rect x="829.44" y="665.60" width="6.00" height="73.20" fill="#42a3d0" />
<rect x="837.07" y="592.40" width="6.00" height="146.40" fill="#42a3d0" />
<rect x="844.69" y="665.60" width="6.00" height="73.20" fill="#42a3d0" />
<rect x="852.31" y="665.60" width="6.00" height="73.20" fill="#42a3d0" />
<rect x="859.94" y="665.60" width="6.00" height="73.20" fill="#42a3d0" />
<rect x="867.56" y="665.60" width="6.00" height="73.20" fill="#42a3d0" />
<rect x="875.19" y="519.20" width="6.00" height="219.60" fill="#42a3d0" />
<rect x="882.81" y="519.20" width="6.00" height="219.60" fill="#42a3d0" />
<rect x="890.44" y="665.60" width="6.00" height="73.20" fill="#42a3d0" />
<rect x="898.06" y="592.40" width="6.00" height="146.40" fill="#42a3d0" />
<rect x="905.68" y="665.60" width="6.00" height="73.20" fill="#42a3d0" />
<rect x="913.31" y="665.60" width="6.00" height="73.20" fill="#42a3d0" />
<rect x="920.93" y="665.60" width="6.00" height="73.20" fill="#42a3d0" />
<rect x="928.56" y="665.60" width="6.00" height="73.20" fill="#42a3d0" />
<rect x="936.18" y="592.40" width="6.00" height="146.40" fill="#42a3d0" />
<rect x="943.80" y="519.20" width="6.00" height="219.60" fill="#42a3d0" />
<rect x="951.43" y="665.60" width="6.00" height="73.20" fill="#42a3d0" />
<rect x="959.05" y="592.40" width="6.00" height="146.40" fill="#42a3d0" />
<rect x="966.68" y="665.60" width="6.00" height="73.20" fill="#42a3d0" />
<rect x="974.30" y="592.40" width="6.00" height="146.40" fill="#42a3d0" />
<polyline points="565.6,665.6 573.2,665.6 580.8,592.4 588.5,665.6 596.1,592.4 603.7,592.4 611.3,665.6 619.0,592.4 626.6,592.4 634.2,519.2 641.8,665.6 649.5,665.6 657.1,519.2 664.7,592.4 672.3,665.6 680.0,592.4 687.6,665.6 695.2,665.6 702.8,665.6 710.5,665.6 718.1,665.6 725.7,665.6 733.3,665.6 741.0,519.2 748.6,592.4 756.2,665.6 763.8,665.6 771.5,665.6 779.1,665.6 786.7,592.4 794.3,519.2 801.9,592.4 809.6,446.0 817.2,665.6 824.8,665.6 832.4,665.6 840.1,592.4 847.7,665.6 855.3,665.6 862.9,665.6 870.6,665.6 878.2,519.2 885.8,519.2 893.4,665.6 901.1,592.4 908.7,665.6 916.3,665.6 923.9,665.6 931.6,665.6 939.2,592.4 946.8,519.2 954.4,665.6 962.1,592.4 969.7,665.6 977.3,592.4" fill="none" stroke="#e09a4c" stroke-width="1.5" stroke-linejoin="round"/>
<circle cx="565.6" cy="665.6" r="1.5" fill="#fff" stroke="#d89850" stroke-width="0.7"/>
<circle cx="573.2" cy="665.6" r="1.5" fill="#fff" stroke="#d89850" stroke-width="0.7"/>
<circle cx="580.8" cy="592.4" r="1.5" fill="#fff" stroke="#d89850" stroke-width="0.7"/>
<circle cx="588.5" cy="665.6" r="1.5" fill="#fff" stroke="#d89850" stroke-width="0.7"/>
<circle cx="596.1" cy="592.4" r="1.5" fill="#fff" stroke="#d89850" stroke-width="0.7"/>
<circle cx="603.7" cy="592.4" r="1.5" fill="#fff" stroke="#d89850" stroke-width="0.7"/>
<circle cx="611.3" cy="665.6" r="1.5" fill="#fff" stroke="#d89850" stroke-width="0.7"/>
<circle cx="619.0" cy="592.4" r="1.5" fill="#fff" stroke="#d89850" stroke-width="0.7"/>
<circle cx="626.6" cy="592.4" r="1.5" fill="#fff" stroke="#d89850" stroke-width="0.7"/>
<circle cx="634.2" cy="519.2" r="1.5" fill="#fff" stroke="#d89850" stroke-width="0.7"/>
<circle cx="641.8" cy="665.6" r="1.5" fill="#fff" stroke="#d89850" stroke-width="0.7"/>
<circle cx="649.5" cy="665.6" r="1.5" fill="#fff" stroke="#d89850" stroke-width="0.7"/>
<circle cx="657.1" cy="519.2" r="1.5" fill="#fff" stroke="#d89850" stroke-width="0.7"/>
<circle cx="664.7" cy="592.4" r="1.5" fill="#fff" stroke="#d89850" stroke-width="0.7"/>
<circle cx="672.3" cy="665.6" r="1.5" fill="#fff" stroke="#d89850" stroke-width="0.7"/>
<circle cx="680.0" cy="592.4" r="1.5" fill="#fff" stroke="#d89850" stroke-width="0.7"/>
<circle cx="687.6" cy="665.6" r="1.5" fill="#fff" stroke="#d89850" stroke-width="0.7"/>
<circle cx="695.2" cy="665.6" r="1.5" fill="#fff" stroke="#d89850" stroke-width="0.7"/>
<circle cx="702.8" cy="665.6" r="1.5" fill="#fff" stroke="#d89850" stroke-width="0.7"/>
<circle cx="710.5" cy="665.6" r="1.5" fill="#fff" stroke="#d89850" stroke-width="0.7"/>
<circle cx="718.1" cy="665.6" r="1.5" fill="#fff" stroke="#d89850" stroke-width="0.7"/>
<circle cx="725.7" cy="665.6" r="1.5" fill="#fff" stroke="#d89850" stroke-width="0.7"/>
<circle cx="733.3" cy="665.6" r="1.5" fill="#fff" stroke="#d89850" stroke-width="0.7"/>
<circle cx="741.0" cy="519.2" r="1.5" fill="#fff" stroke="#d89850" stroke-width="0.7"/>
<circle cx="748.6" cy="592.4" r="1.5" fill="#fff" stroke="#d89850" stroke-width="0.7"/>
<circle cx="756.2" cy="665.6" r="1.5" fill="#fff" stroke="#d89850" stroke-width="0.7"/>
<circle cx="763.8" cy="665.6" r="1.5" fill="#fff" stroke="#d89850" stroke-width="0.7"/>
<circle cx="771.5" cy="665.6" r="1.5" fill="#fff" stroke="#d89850" stroke-width="0.7"/>
<circle cx="779.1" cy="665.6" r="1.5" fill="#fff" stroke="#d89850" stroke-width="0.7"/>
<circle cx="786.7" cy="592.4" r="1.5" fill="#fff" stroke="#d89850" stroke-width="0.7"/>
<circle cx="794.3" cy="519.2" r="1.5" fill="#fff" stroke="#d89850" stroke-width="0.7"/>
<circle cx="801.9" cy="592.4" r="1.5" fill="#fff" stroke="#d89850" stroke-width="0.7"/>
<circle cx="809.6" cy="446.0" r="1.5" fill="#fff" stroke="#d89850" stroke-width="0.7"/>
<circle cx="817.2" cy="665.6" r="1.5" fill="#fff" stroke="#d89850" stroke-width="0.7"/>
<circle cx="824.8" cy="665.6" r="1.5" fill="#fff" stroke="#d89850" stroke-width="0.7"/>
<circle cx="832.4" cy="665.6" r="1.5" fill="#fff" stroke="#d89850" stroke-width="0.7"/>
<circle cx="840.1" cy="592.4" r="1.5" fill="#fff" stroke="#d89850" stroke-width="0.7"/>
<circle cx="847.7" cy="665.6" r="1.5" fill="#fff" stroke="#d89850" stroke-width="0.7"/>
<circle cx="855.3" cy="665.6" r="1.5" fill="#fff" stroke="#d89850" stroke-width="0.7"/>
<circle cx="862.9" cy="665.6" r="1.5" fill="#fff" stroke="#d89850" stroke-width="0.7"/>
<circle cx="870.6" cy="665.6" r="1.5" fill="#fff" stroke="#d89850" stroke-width="0.7"/>
<circle cx="878.2" cy="519.2" r="1.5" fill="#fff" stroke="#d89850" stroke-width="0.7"/>
<circle cx="885.8" cy="519.2" r="1.5" fill="#fff" stroke="#d89850" stroke-width="0.7"/>
<circle cx="893.4" cy="665.6" r="1.5" fill="#fff" stroke="#d89850" stroke-width="0.7"/>
<circle cx="901.1" cy="592.4" r="1.5" fill="#fff" stroke="#d89850" stroke-width="0.7"/>
<circle cx="908.7" cy="665.6" r="1.5" fill="#fff" stroke="#d89850" stroke-width="0.7"/>
<circle cx="916.3" cy="665.6" r="1.5" fill="#fff" stroke="#d89850" stroke-width="0.7"/>
<circle cx="923.9" cy="665.6" r="1.5" fill="#fff" stroke="#d89850" stroke-width="0.7"/>
<circle cx="931.6" cy="665.6" r="1.5" fill="#fff" stroke="#d89850" stroke-width="0.7"/>
<circle cx="939.2" cy="592.4" r="1.5" fill="#fff" stroke="#d89850" stroke-width="0.7"/>
<circle cx="946.8" cy="519.2" r="1.5" fill="#fff" stroke="#d89850" stroke-width="0.7"/>
<circle cx="954.4" cy="665.6" r="1.5" fill="#fff" stroke="#d89850" stroke-width="0.7"/>
<circle cx="962.1" cy="592.4" r="1.5" fill="#fff" stroke="#d89850" stroke-width="0.7"/>
<circle cx="969.7" cy="665.6" r="1.5" fill="#fff" stroke="#d89850" stroke-width="0.7"/>
<circle cx="977.3" cy="592.4" r="1.5" fill="#fff" stroke="#d89850" stroke-width="0.7"/>
<clipPath id="oc"><rect x="545.5" y="740" width="480" height="30"/></clipPath>
<line x1="566.00" y1="738.80" x2="566.00" y2="741.80" stroke="#888" stroke-width="1" />
<text x="566.00" y="753.95" font-size="9.3" fill="#555" font-weight="normal" text-anchor="middle" textLength="44.0" lengthAdjust="spacingAndGlyphs" clip-path="url(#oc)">Oct 31 2022</text>
<text x="566.00" y="763.65" font-size="9.3" fill="#555" font-weight="normal" text-anchor="middle" textLength="24.0" lengthAdjust="spacingAndGlyphs" >08 AM</text>
<line x1="641.70" y1="738.80" x2="641.70" y2="741.80" stroke="#888" stroke-width="1" />
<text x="641.70" y="753.95" font-size="9.3" fill="#555" font-weight="normal" text-anchor="middle" textLength="44.0" lengthAdjust="spacingAndGlyphs" clip-path="url(#oc)">Nov 1 2022</text>
<text x="641.70" y="763.65" font-size="9.3" fill="#555" font-weight="normal" text-anchor="middle" textLength="24.0" lengthAdjust="spacingAndGlyphs" >12 PM</text>
<line x1="718.40" y1="738.80" x2="718.40" y2="741.80" stroke="#888" stroke-width="1" />
<text x="718.40" y="753.95" font-size="9.3" fill="#555" font-weight="normal" text-anchor="middle" textLength="44.0" lengthAdjust="spacingAndGlyphs" clip-path="url(#oc)">Nov 2 2022</text>
<text x="718.40" y="763.65" font-size="9.3" fill="#555" font-weight="normal" text-anchor="middle" textLength="24.0" lengthAdjust="spacingAndGlyphs" >03 PM</text>
<line x1="794.70" y1="738.80" x2="794.70" y2="741.80" stroke="#888" stroke-width="1" />
<text x="794.70" y="753.95" font-size="9.3" fill="#555" font-weight="normal" text-anchor="middle" textLength="44.0" lengthAdjust="spacingAndGlyphs" clip-path="url(#oc)">Nov 4 2022</text>
<text x="794.70" y="763.65" font-size="9.3" fill="#555" font-weight="normal" text-anchor="middle" textLength="24.0" lengthAdjust="spacingAndGlyphs" >07 AM</text>
<line x1="871.00" y1="738.80" x2="871.00" y2="741.80" stroke="#888" stroke-width="1" />
<text x="871.00" y="753.95" font-size="9.3" fill="#555" font-weight="normal" text-anchor="middle" textLength="44.0" lengthAdjust="spacingAndGlyphs" clip-path="url(#oc)">Nov 7 2022</text>
<text x="871.00" y="763.65" font-size="9.3" fill="#555" font-weight="normal" text-anchor="middle" textLength="24.0" lengthAdjust="spacingAndGlyphs" >10 AM</text>
<line x1="947.20" y1="738.80" x2="947.20" y2="741.80" stroke="#888" stroke-width="1" />
<text x="947.20" y="753.95" font-size="9.3" fill="#555" font-weight="normal" text-anchor="middle" textLength="44.0" lengthAdjust="spacingAndGlyphs" clip-path="url(#oc)">Nov 8 2022</text>
<text x="947.20" y="763.65" font-size="9.3" fill="#555" font-weight="normal" text-anchor="middle" textLength="24.0" lengthAdjust="spacingAndGlyphs" >07 AM</text>
<text transform="translate(542.5,600) rotate(-90)" font-size="9.3" text-anchor="middle" fill="#666" textLength="140" lengthAdjust="spacingAndGlyphs" xml:space="preserve"><tspan>Y1 Axis: </tspan><tspan font-weight="bold" fill="#333">Operator (Distinct Count)</tspan></text>
<text transform="translate(1016.5,600) rotate(-90)" font-size="9.3" text-anchor="middle" fill="#666" textLength="140" lengthAdjust="spacingAndGlyphs" xml:space="preserve"><tspan>Y2 Axis: </tspan><tspan font-weight="bold" fill="#333">Operator (Distinct Count)</tspan></text>
<text x="775.20" y="784.65" font-size="9.3" text-anchor="middle" textLength="204.0" lengthAdjust="spacingAndGlyphs"  xml:space="preserve"><tspan fill="#666" font-weight="normal">Trend: </tspan><tspan fill="#333" font-weight="bold">Logindatetime (GMT)</tspan><tspan fill="#666" font-weight="normal">    Granularity: </tspan><tspan fill="#333" font-weight="bold">Hour</tspan></text>
<text x="775.80" y="799.70" font-size="7.5" text-anchor="middle" textLength="322.0" lengthAdjust="spacingAndGlyphs"  xml:space="preserve"><tspan fill="#777" font-weight="bold">LIVE</tspan><tspan fill="#9a9a9a" font-weight="normal"> | Logindatetime GMT: Oct 31 2022, 08:46:13.620 AM - Nov 8 2022, 03:33:43.028 PM</tspan></text>
<rect x="1040.00" y="67.50" width="8.00" height="752.00" fill="#edf1f4" />
<rect x="1048.00" y="82.00" width="510.00" height="728.00" fill="#ffffff" />
<rect x="1558.00" y="66.00" width="12.60" height="753.00" fill="#eef0f5" />
<text x="1054.80" y="100.48" font-size="13" fill="#666" font-weight="normal" text-anchor="start" textLength="143.0" lengthAdjust="spacingAndGlyphs" >Data Sources &amp; Analysis</text>
<rect x="1073.80" y="113.00" width="111.50" height="115.30" fill="#0b7fa6" />
<text x="1081.5" y="129.2" font-size="11" font-weight="bold" fill="#fff" textLength="46.5" lengthAdjust="spacingAndGlyphs">Business</text>
<text x="1081.5" y="141.1" font-size="11" font-weight="bold" fill="#fff" textLength="82.5" lengthAdjust="spacingAndGlyphs">Activity Query...</text>
<rect x="1168.6" y="122.7" width="9" height="8.3" rx="1" fill="none" stroke="#e8f8fa" stroke-width="1.5"/>
<path d="M1170.6 126.8 L1174.3 126.8 M1172.6 124.8 L1174.7 126.8 L1172.6 128.9" stroke="#e8f8fa" stroke-width="1.3" fill="none"/>
<g transform="translate(1154.4,200.8) rotate(-45)"><path d="M-3 -8.2 A8.2 8.2 0 0 0 -5.6 6 L-2.8 6 L-2.8 22 L2.8 22 L2.8 6 L5.6 6 A8.2 8.2 0 0 0 3 -8.2 L3 -2.5 L-3 -2.5 Z" fill="#f0fcff"/></g>
<rect x="1190.00" y="113.00" width="111.50" height="115.30" fill="#6b7580" />
<text x="1197.7" y="129.2" font-size="11" font-weight="bold" fill="#fff" textLength="46.5" lengthAdjust="spacingAndGlyphs">Business</text>
<text x="1197.7" y="141.1" font-size="11" font-weight="bold" fill="#fff" textLength="82.5" lengthAdjust="spacingAndGlyphs">Activity Query...</text>
<rect x="1284.8" y="122.7" width="9" height="8.3" rx="1" fill="none" stroke="#e8f8fa" stroke-width="1.5"/>
<path d="M1286.8 126.8 L1290.5 126.8 M1288.8 124.8 L1290.9 126.8 L1288.8 128.9" stroke="#e8f8fa" stroke-width="1.3" fill="none"/>
<g fill="#f4f8fa"><rect x="1271.1" y="199.0" width="3" height="10.5"/><path d="M1267.8 201.2 L1272.6 195.8 L1277.4 201.2 Z"/><rect x="1278.5" y="204.3" width="3" height="10.5"/><path d="M1275.2 212.6 L1280.0 217.6 L1284.8 212.6 Z"/></g>
<rect x="1306.30" y="113.00" width="111.50" height="115.30" fill="#56a234" />
<text x="1314.0" y="129.2" font-size="11" font-weight="bold" fill="#fff" textLength="46.5" lengthAdjust="spacingAndGlyphs">Business</text>
<text x="1314.0" y="141.1" font-size="11" font-weight="bold" fill="#fff" textLength="82.5" lengthAdjust="spacingAndGlyphs">Activity Query...</text>
<rect x="1401.1" y="122.7" width="9" height="8.3" rx="1" fill="none" stroke="#e8f8fa" stroke-width="1.5"/>
<path d="M1403.1 126.8 L1406.8 126.8 M1405.1 124.8 L1407.2 126.8 L1405.1 128.9" stroke="#e8f8fa" stroke-width="1.3" fill="none"/>
<g fill="#f4f8fa"><rect x="1387.4" y="199.0" width="3" height="10.5"/><path d="M1384.1 201.2 L1388.9 195.8 L1393.7 201.2 Z"/><rect x="1394.8" y="204.3" width="3" height="10.5"/><path d="M1391.5 212.6 L1396.3 217.6 L1401.1 212.6 Z"/></g>
<rect x="1422.30" y="113.00" width="111.50" height="115.30" fill="#e03a5e" />
<text x="1430.0" y="129.2" font-size="11" font-weight="bold" fill="#fff" textLength="60" lengthAdjust="spacingAndGlyphs">Insight Tile</text>
<text x="1430.0" y="141.1" font-size="11" font-weight="bold" fill="#fff" textLength="52.7" lengthAdjust="spacingAndGlyphs">Definition</text>
<rect x="1517.1" y="122.7" width="9" height="8.3" rx="1" fill="none" stroke="#e8f8fa" stroke-width="1.5"/>
<path d="M1519.1 126.8 L1522.8 126.8 M1521.1 124.8 L1523.2 126.8 L1521.1 128.9" stroke="#e8f8fa" stroke-width="1.3" fill="none"/>
<g fill="#fbeef2"><rect x="1497.4" y="198.1" width="13.5" height="2.4"/><rect x="1514.9" y="198.1" width="4.8" height="2.4"/><rect x="1511.9" y="195.3" width="3" height="7.5"/><rect x="1497.4" y="205.4" width="4.6" height="2.4"/><rect x="1505.6" y="205.4" width="14.1" height="2.4"/><rect x="1502.0" y="202.8" width="3" height="7.5"/><rect x="1497.4" y="212.7" width="9.5" height="2.4"/><rect x="1510.6" y="212.7" width="9.1" height="2.4"/><rect x="1507.3" y="210.2" width="3" height="7.6"/></g>
<rect x="1073.80" y="233.70" width="111.50" height="115.30" fill="#d8012f" />
<text x="1081.5" y="249.9" font-size="11" font-weight="bold" fill="#fff" textLength="54" lengthAdjust="spacingAndGlyphs">Embedded</text>
<text x="1081.5" y="261.8" font-size="11" font-weight="bold" fill="#fff" textLength="58" lengthAdjust="spacingAndGlyphs">Analytics...</text>
<rect x="1168.6" y="243.4" width="9" height="8.3" rx="1" fill="none" stroke="#e8f8fa" stroke-width="1.5"/>
<path d="M1170.6 247.5 L1174.3 247.5 M1172.6 245.5 L1174.7 247.5 L1172.6 249.6" stroke="#e8f8fa" stroke-width="1.3" fill="none"/>
<rect x="1148.3" y="315.3" width="23.2" height="23.2" rx="2.8" fill="#fdf6f8"/>
<g fill="#7c2434"><rect x="1153.3" y="325.6" width="2.8" height="7.1"/><rect x="1158.5" y="321.4" width="2.8" height="11.3"/><rect x="1163.4" y="328.7" width="2.8" height="4"/></g>
<path d="M1086 508 L1086 522 L1089.5 518.5 L1092 524 L1094 523 L1091.5 517.5 L1096 517.5 Z" fill="#fff" stroke="#333" stroke-width="1"/></svg>
</body></html>
